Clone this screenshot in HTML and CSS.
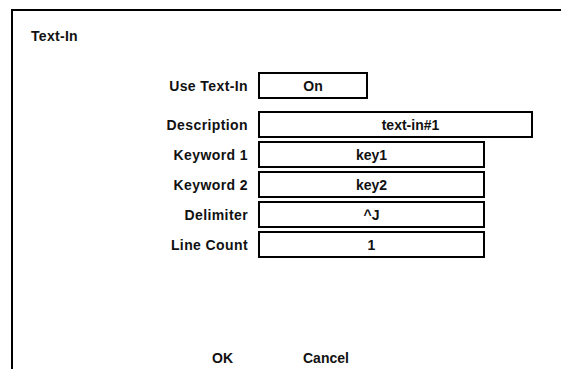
FILE: index.html
```html
<!DOCTYPE html>
<html lang="en">
<head>
    <meta charset="UTF-8">
    <meta name="viewport" content="width=device-width, initial-scale=1.0">
    <title>Text-In</title>
    <link rel="stylesheet" href="styles.css">
</head>
<body>
    <div class="frame">
        <div class="title">Text-In</div>
        <div class="form">
            <div class="row first">
                <span class="label">Use Text-In</span>
                <span class="field short">On</span>
            </div>
            <div class="row">
                <span class="label">Description</span>
                <span class="field wide">text-in#1</span>
            </div>
            <div class="row">
                <span class="label">Keyword 1</span>
                <span class="field">key1</span>
            </div>
            <div class="row">
                <span class="label">Keyword 2</span>
                <span class="field">key2</span>
            </div>
            <div class="row">
                <span class="label">Delimiter</span>
                <span class="field">^J</span>
            </div>
            <div class="row">
                <span class="label">Line Count</span>
                <span class="field">1</span>
            </div>
        </div>
        <div class="buttons">
            <span class="btn">OK</span>
            <span class="btn">Cancel</span>
        </div>
    </div>
</body>
</html>
```

FILE: styles.css
```css
html, body {
    margin: 0;
    background: #fff;
}
body {
    font-family: "Liberation Sans", Arial, sans-serif;
    font-size: 14px;
    font-weight: bold;
    line-height: 18px;
    color: #111;
}
.frame {
    box-sizing: border-box;
    margin: 9px 0 0 11px;
    height: 360px;
    border-top: 2px solid #000;
    border-left: 2px solid #000;
}
.title {
    padding: 16px 0 0 18px;
    letter-spacing: 0.3px;
}
.form {
    margin-top: 27px;
    display: flex;
    flex-direction: column;
    gap: 3px;
}
.row {
    display: grid;
    grid-template-columns: 235px auto;
    column-gap: 10px;
    align-items: center;
}
.row.first {
    margin-bottom: 9px;
}
.label {
    text-align: right;
    letter-spacing: 0.4px;
}
.field {
    box-sizing: border-box;
    display: flex;
    align-items: center;
    justify-content: center;
    width: 227px;
    height: 27px;
    border: 2px solid #000;
}
.field.short {
    width: 110px;
}
.field.wide {
    width: 275px;
    padding-left: 30px;
}
.buttons {
    margin-top: 91px;
    padding-left: 199px;
    display: flex;
    gap: 70px;
}
```
